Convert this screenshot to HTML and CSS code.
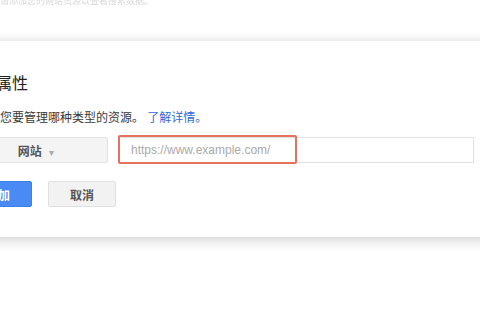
FILE: index.html
```html
<!DOCTYPE html>
<html lang="zh-CN">

<head>
    <meta charset="UTF-8">
    <meta name="viewport" content="width=device-width, initial-scale=1.0">
    <title>添加属性</title>
    <link rel="stylesheet" href="styles.css">
</head>

<body>
    <div class="top-note">
        <p>请添加您的网站资源以查看搜索数据。</p>
    </div>

    <div class="dialog">
        <h2 class="dialog-title">添加属性</h2>
        <p class="dialog-desc">请选择您要管理哪种类型的资源。 <a href="#" class="link">了解详情。</a></p>

        <div class="field-row">
            <button class="type-select">网站 <span class="caret">▾</span></button>
            <div class="url-wrap">
                <input class="url-input" type="text" placeholder="https://www.example.com/">
                <div class="highlight"></div>
            </div>
        </div>

        <div class="actions">
            <button class="btn btn-primary">添加</button>
            <button class="btn btn-default">取消</button>
        </div>
    </div>
</body>

</html>
```

FILE: styles.css
```css
/**** DEFAULTS ****/

* {
    padding: 0;
    margin: 0;
    box-sizing: border-box;
}

html {
    font-family: "Liberation Sans", "Noto Sans CJK SC", sans-serif;
    background: #fff;
}

body {
    overflow: hidden;
    height: 320px;
}

/**** TOP NOTE (cut off) ****/

.top-note {
    height: 10px;
    overflow: hidden;
}

.top-note p {
    margin-top: -6px;
    font-size: 9px;
    line-height: 14px;
    color: #d9d9d9;
    filter: blur(0.5px);
}

/**** DIALOG ****/

.dialog {
    margin: 31px -18px 0 -60px;
    padding: 33px 24px 30px;
    background: #fff;
    box-shadow: 0 3px 12px rgba(0, 0, 0, 0.18), 0 -2px 8px rgba(0, 0, 0, 0.04);
}

.dialog-title {
    font-size: 16px;
    line-height: 20px;
    font-weight: normal;
    color: #222;
    margin-bottom: 15px;
}

.dialog-desc {
    font-size: 12px;
    line-height: 18px;
    color: #3a3a3a;
    margin-bottom: 10px;
}

.link {
    color: #3468d6;
    text-decoration: none;
}

/**** FIELD ROW ****/

.field-row {
    display: flex;
    gap: 10px;
    height: 26px;
}

.type-select {
    width: 144px;
    background: #f4f4f4;
    border: 1px solid #e2e2e2;
    border-radius: 2px;
    font-family: inherit;
    font-size: 12px;
    font-weight: bold;
    color: #555;
}

.caret {
    color: #aaa;
    font-size: 10px;
    font-weight: normal;
    margin-left: 4px;
}

.url-wrap {
    flex: 1;
    position: relative;
}

.url-input {
    width: 100%;
    height: 100%;
    border: 1px solid #e0e0e0;
    padding-left: 12px;
    font-family: inherit;
    font-size: 12px;
    outline: none;
}

.url-input::placeholder {
    color: #aaa;
}

.highlight {
    position: absolute;
    left: 0;
    top: -2px;
    width: 179px;
    height: 29px;
    border: 2px solid #e8705c;
    border-radius: 2px;
}

/**** ACTIONS ****/

.actions {
    display: flex;
    gap: 16px;
    margin-top: 18px;
}

.btn {
    width: 68px;
    height: 26px;
    border-radius: 2px;
    font-family: inherit;
    font-size: 12px;
    font-weight: bold;
}

.btn-primary {
    background: #4a8af4;
    border: 1px solid #3f7fe8;
    color: #fff;
}

.btn-default {
    background: #f2f2f2;
    border: 1px solid #e0e0e0;
    color: #555;
}
```
